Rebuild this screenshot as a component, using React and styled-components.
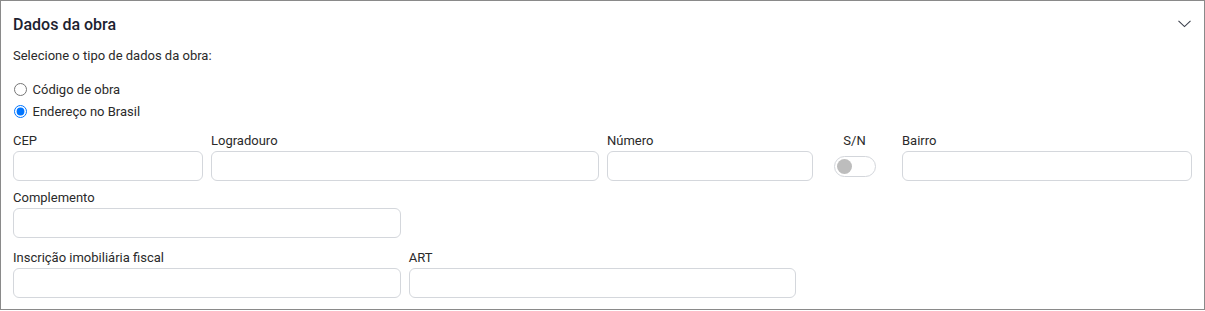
import React, { useState } from "react";
import styled, { createGlobalStyle } from "styled-components";

const GlobalStyle = createGlobalStyle`
  html, body { margin: 0; padding: 0; background: #ffffff; }
  body { font-family: Roboto, "Liberation Sans", Arial, sans-serif; }
  * { box-sizing: border-box; }
`;

const Card = styled.section`
  width: 1205px;
  height: 310px;
  border: 1px solid #8a8a8a;
  background: #fff;
  padding: 14px 12px 11px 12px;
  display: flex;
  flex-direction: column;
`;

const Header = styled.div`
  display: flex;
  align-items: center;
  justify-content: space-between;
  height: 20px;
`;

const Title = styled.h2`
  margin: 0;
  font-size: 16px;
  line-height: 20px;
  font-weight: 500;
  color: #1d2230;
`;

const Chevron = styled.svg`
  width: 13px;
  height: 8px;
  margin-right: 1px;
  margin-top: -2px;
  color: #3a3f4b;
`;

const Prompt = styled.p`
  margin: 13px 0 0 0;
  font-size: 13px;
  line-height: 16px;
  color: #2a2a2a;
`;

const RadioGroup = styled.div`
  margin-top: 14px;
  display: flex;
  flex-direction: column;
`;

const RadioRow = styled.label`
  display: flex;
  align-items: center;
  gap: 6px;
  height: 22px;
  font-size: 13px;
  color: #2a2a2a;
  cursor: pointer;
`;

const Radio = styled.input`
  width: 13px;
  height: 13px;
  margin: 0 0 0 0.5px;
`;

const Row = styled.div`
  display: grid;
  grid-template-columns: ${(p) => p.$cols};
  column-gap: 8px;
  margin-top: ${(p) => p.$top}px;
`;

const Field = styled.div`
  display: flex;
  flex-direction: column;
  align-items: ${(p) => (p.$center ? "center" : "stretch")};
  padding-right: ${(p) => (p.$center ? "6px" : "0")};
`;

const Label = styled.label`
  font-size: 13px;
  line-height: 16px;
  color: #2a2a2a;
  margin-bottom: 2px;
  white-space: nowrap;
`;

const Input = styled.input`
  height: 30px;
  width: 100%;
  border: 1px solid #d4d7dc;
  border-radius: 6px;
  background: #fff;
  padding: 0 10px;
  font-family: inherit;
  font-size: 13px;
  color: #2a2a2a;
  outline: none;
`;

const ToggleWrap = styled.div`
  height: 30px;
  display: flex;
  align-items: center;
`;

const Toggle = styled.button`
  width: 42px;
  height: 21px;
  border: 1px solid #d3d6db;
  border-radius: 11px;
  background: #fff;
  padding: 0 2px;
  display: flex;
  align-items: center;
  justify-content: ${(p) => (p.$on ? "flex-end" : "flex-start")};
  cursor: pointer;
`;

const Knob = styled.span`
  width: 15px;
  height: 15px;
  border-radius: 50%;
  background: ${(p) => (p.$on ? "#1a73e8" : "#bdbdbd")};
`;

export default function App() {
  const [tipo, setTipo] = useState("endereco");
  const [sn, setSn] = useState(false);

  return (
    <>
      <GlobalStyle />
      <Card>
        <Header>
          <Title>Dados da obra</Title>
          <Chevron viewBox="0 0 13 8" fill="none">
            <polyline points="0.5,0.8 6.5,6.6 12.5,0.8" stroke="currentColor" strokeWidth="1.1" />
          </Chevron>
        </Header>
        <Prompt>Selecione o tipo de dados da obra:</Prompt>
        <RadioGroup>
          <RadioRow>
            <Radio
              type="radio"
              name="tipo"
              checked={tipo === "codigo"}
              onChange={() => setTipo("codigo")}
            />
            Código de obra
          </RadioRow>
          <RadioRow>
            <Radio
              type="radio"
              name="tipo"
              checked={tipo === "endereco"}
              onChange={() => setTipo("endereco")}
            />
            Endereço no Brasil
          </RadioRow>
        </RadioGroup>

        <Row $cols="190px 388px 206px 73px 1fr" $top={11}>
          <Field>
            <Label>CEP</Label>
            <Input />
          </Field>
          <Field>
            <Label>Logradouro</Label>
            <Input />
          </Field>
          <Field>
            <Label>Número</Label>
            <Input />
          </Field>
          <Field $center>
            <Label>S/N</Label>
            <ToggleWrap>
              <Toggle $on={sn} onClick={() => setSn(!sn)} aria-label="S/N">
                <Knob $on={sn} />
              </Toggle>
            </ToggleWrap>
          </Field>
          <Field>
            <Label>Bairro</Label>
            <Input />
          </Field>
        </Row>

        <Row $cols="1fr 1fr 1fr" $top={9}>
          <Field>
            <Label>Complemento</Label>
            <Input />
          </Field>
        </Row>

        <Row $cols="1fr 1fr 1fr" $top={12}>
          <Field>
            <Label>Inscrição imobiliária fiscal</Label>
            <Input />
          </Field>
          <Field>
            <Label>ART</Label>
            <Input />
          </Field>
        </Row>
      </Card>
    </>
  );
}
